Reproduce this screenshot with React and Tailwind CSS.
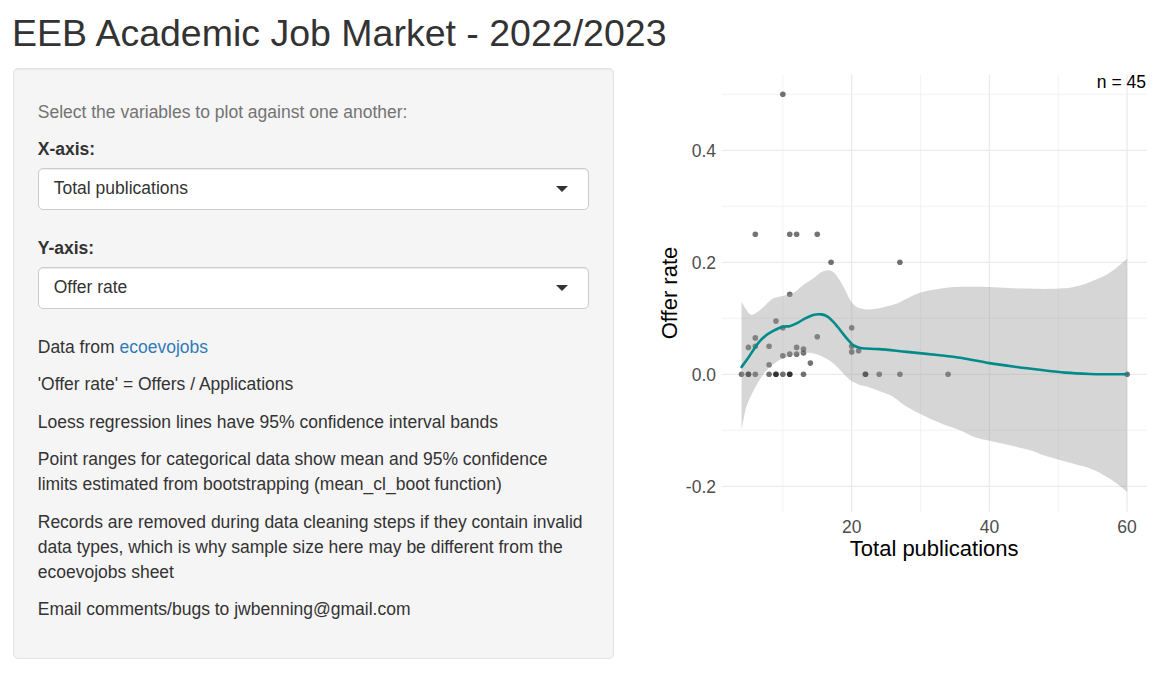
const X = (x) => 714 + 6.885 * x
const Y = (y) => 374.3 - 560 * y

// smooth path through points (catmull-rom -> bezier)
function smooth(pts, move = true) {
  const p = pts.map(([x, y]) => [X(x), Y(y)])
  let d = move ? `M${p[0][0]},${p[0][1]}` : `L${p[0][0]},${p[0][1]}`
  for (let i = 0; i < p.length - 1; i++) {
    const p0 = p[i - 1] || p[i]
    const p1 = p[i]
    const p2 = p[i + 1]
    const p3 = p[i + 2] || p2
    const c1 = [p1[0] + (p2[0] - p0[0]) / 6, p1[1] + (p2[1] - p0[1]) / 6]
    const c2 = [p2[0] - (p3[0] - p1[0]) / 6, p2[1] - (p3[1] - p1[1]) / 6]
    d += ` C${c1[0]},${c1[1]} ${c2[0]},${c2[1]} ${p2[0]},${p2[1]}`
  }
  return d
}

const upper = [
  [4, 0.129], [5, 0.11], [5.7, 0.107], [7, 0.118], [8.5, 0.135], [10, 0.14], [11.5, 0.145],
  [13, 0.16], [14.4, 0.171], [15.5, 0.182], [16.6, 0.186], [17.4, 0.182], [18.1, 0.171],
  [19, 0.152], [19.75, 0.133], [20.5, 0.122], [21.5, 0.117], [23, 0.116], [26, 0.124],
  [28, 0.135], [30, 0.146], [33, 0.153], [35.2, 0.156], [40, 0.156], [45, 0.153],
  [50.2, 0.153], [53, 0.158], [56, 0.172], [58, 0.186], [60, 0.207],
]
const lower = [
  [60, -0.21], [58.5, -0.195], [57, -0.183], [55, -0.17], [52, -0.159], [48, -0.145],
  [45.8, -0.135], [40.5, -0.12], [38, -0.113], [35.7, -0.1], [33, -0.088], [30.8, -0.076],
  [28, -0.058], [26, -0.04], [24, -0.03], [22.2, -0.022], [21, -0.018], [19.75, -0.01],
  [18.5, 0.005], [17.3, 0.02], [16, 0.03], [14.4, 0.0375], [12.5, 0.0375], [11, 0.033],
  [9.6, 0.026], [8, 0.012], [6.6, -0.01], [5.5, -0.035], [4.7, -0.058], [4.3, -0.08], [4, -0.1],
]
const fit = [
  [4, 0.013], [5, 0.03], [5.7, 0.043], [6.5, 0.057], [7.6, 0.07], [9, 0.08], [10, 0.085],
  [11, 0.086], [12, 0.091], [13, 0.098], [14.4, 0.106], [15.6, 0.107], [16.5, 0.103],
  [17.3, 0.094], [18, 0.084], [18.7, 0.073], [19.5, 0.061], [20.2, 0.052], [21, 0.048],
  [22, 0.046], [24, 0.045], [28, 0.04], [32.8, 0.034], [36, 0.029], [40, 0.02], [44, 0.013],
  [47.3, 0.008], [51, 0.003], [54.6, 0.0005], [57, 0], [60, 0],
]

const points = [
  [4, 0], [5, 0], [5, 0], [6, 0], [8, 0], [9, 0], [9, 0], [10, 0], [11, 0], [11, 0], [13, 0],
  [22, 0], [22, 0], [24, 0], [27, 0], [34, 0], [60, 0],
  [10, 0.5], [6, 0.25], [11, 0.25], [12, 0.25], [15, 0.25], [17, 0.2], [27, 0.2], [11, 0.143],
  [9, 0.095], [10, 0.083], [6, 0.065], [5, 0.048], [6, 0.05], [8, 0.05], [10, 0.033],
  [11, 0.036], [12, 0.048], [12, 0.036], [13, 0.045], [13, 0.038], [14, 0.02], [8, 0.017],
  [15, 0.067], [20, 0.083], [20, 0.05], [20, 0.04], [21, 0.042],
]

function Plot() {
  const majorY = [0.4, 0.2, 0, -0.2]
  const minorY = [0.5, 0.3, 0.1, -0.1]
  const majorX = [20, 40, 60]
  const minorX = [10, 30, 50]
  const font = "'Liberation Sans', Arial, sans-serif"

  return (
    <svg width="520" height="512" viewBox="640 68 520 512" className="block">
      {minorY.map((v) => (
        <line key={"my" + v} x1="721.7" x2="1146.7" y1={Y(v)} y2={Y(v)} stroke="#f0f0f0" strokeWidth="0.8" />
      ))}
      {minorX.map((v) => (
        <line key={"mx" + v} x1={X(v)} x2={X(v)} y1="74.4" y2="511.8" stroke="#f0f0f0" strokeWidth="0.8" />
      ))}
      {majorY.map((v) => (
        <line key={"y" + v} x1="721.7" x2="1146.7" y1={Y(v)} y2={Y(v)} stroke="#ebebeb" strokeWidth="1.3" />
      ))}
      {majorX.map((v) => (
        <line key={"x" + v} x1={X(v)} x2={X(v)} y1="74.4" y2="511.8" stroke="#ebebeb" strokeWidth="1.3" />
      ))}

      {points.map(([x, y], i) => (
        <circle key={i} cx={X(x)} cy={Y(y)} r="2.8" fill="#000" fillOpacity="0.55" />
      ))}

      <path d={smooth(upper) + " " + smooth(lower, false) + " Z"} fill="#999999" fillOpacity="0.4" />
      <path d={smooth(fit)} fill="none" stroke="#008b8b" strokeWidth="2.6" strokeLinecap="round" />

      {majorY.map((v) => (
        <text key={"ty" + v} x="716" y={Y(v) + 6.3} textAnchor="end" fontSize="17.5" fill="#4d4d4d" fontFamily={font}>
          {v.toFixed(1)}
        </text>
      ))}
      {majorX.map((v) => (
        <text key={"tx" + v} x={X(v)} y="532.5" textAnchor="middle" fontSize="17.5" fill="#4d4d4d" fontFamily={font}>
          {v}
        </text>
      ))}
      <text x="934.2" y="556" textAnchor="middle" fontSize="22" fill="#000" fontFamily={font}>
        Total publications
      </text>
      <text x="0" y="0" transform="translate(677,293) rotate(-90)" textAnchor="middle" fontSize="22" fill="#000" fontFamily={font}>
        Offer rate
      </text>
      <text x="1146" y="87.5" textAnchor="end" fontSize="17.5" fill="#000" fontFamily={font}>
        n = 45
      </text>
    </svg>
  )
}

function Select({ value }) {
  return (
    <div className="h-[42px] flex items-center justify-between bg-white border border-[#cccccc] rounded-[5px] pl-[15px] pr-[20px] shadow-[inset_0_1px_1px_rgba(0,0,0,0.075)]">
      <span>{value}</span>
      <span className="w-0 h-0 border-l-[6px] border-r-[6px] border-t-[6px] border-l-transparent border-r-transparent border-t-[#333333]" />
    </div>
  )
}

export default function App() {
  return (
    <div className="w-[1176px] h-[673px] overflow-hidden bg-white text-[#333333] font-['Liberation_Sans',Arial,sans-serif] text-[17.5px] leading-[25px]">

      <h2 className="pl-[12px] mt-[13px] mb-[14px] text-[37.5px] leading-[41px] font-normal">
        EEB Academic Job Market - 2022/2023
      </h2>

      <div className="flex items-start pl-[13px]">

        {/* sidebar */}

        <div className="w-[601px] h-[591px] shrink-0 bg-[#f5f5f5] border border-[#e3e3e3] rounded-[5px] px-[23.75px] pt-[23.75px] shadow-[inset_0_1px_1px_rgba(0,0,0,0.05)]">

          <span className="block mt-[7px] mb-[12px] text-[#737373]">
            Select the variables to plot against one another:
          </span>

          <label className="block font-bold mb-[6px]">X-axis:</label>
          <Select value="Total publications" />

          <label className="block font-bold mt-[26px] mb-[6px]">Y-axis:</label>
          <Select value="Offer rate" />

          <div className="mt-[26px] flex flex-col gap-[12.5px]">
            <p>
              Data from <a className="text-[#337ab7]">ecoevojobs</a>
            </p>
            <p>'Offer rate' = Offers / Applications</p>
            <p>Loess regression lines have 95% confidence interval bands</p>
            <p>
              Point ranges for categorical data show mean and 95% confidence limits estimated from bootstrapping (mean_cl_boot function)
            </p>
            <p>
              Records are removed during data cleaning steps if they contain invalid data types, which is why sample size here may be different from the ecoevojobs sheet
            </p>
            <p>Email comments/bugs to jwbenning@gmail.com</p>
          </div>

        </div>

        {/* plot */}

        <div className="ml-[26px]">
          <Plot />
        </div>

      </div>

    </div>
  )
}
